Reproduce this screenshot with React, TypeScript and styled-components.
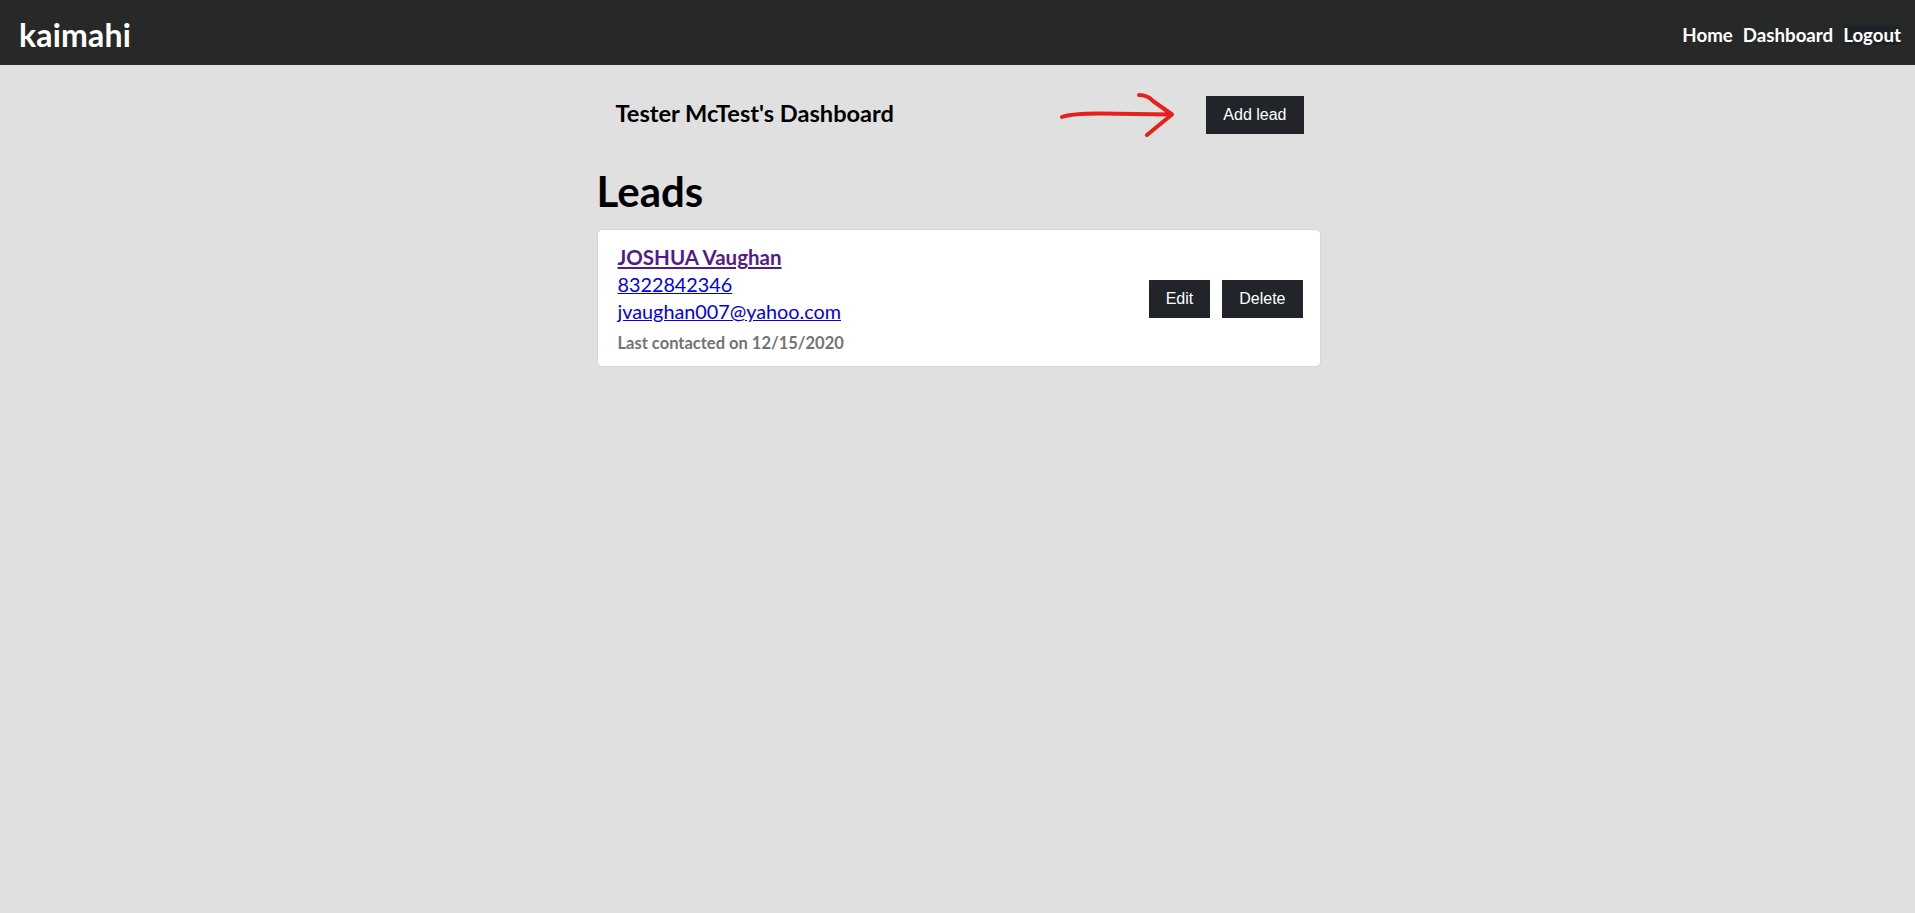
import React from "react";
import styled, { createGlobalStyle } from "styled-components";

const GlobalStyle = createGlobalStyle`
  html, body {
    margin: 0;
    padding: 0;
    background: #e0e0e0;
    font-family: "Lato", "Open Sans", sans-serif;
    color: #000;
  }
  * { box-sizing: border-box; }
`;

const NavBar = styled.nav`
  height: 65px;
  background: #272929;
  display: flex;
  align-items: center;
  justify-content: space-between;
  padding: 4px 14px 0 19px;
`;

const Brand = styled.a`
  color: #fff;
  font-size: 32px;
  font-weight: 700;
  text-decoration: none;
  letter-spacing: 0.2px;
`;

const NavLinks = styled.div`
  display: flex;
  align-items: center;
  gap: 10px;
`;

const NavLink = styled.a<{ $active?: boolean }>`
  color: #fff;
  font-size: 18.7px;
  font-weight: 700;
  text-decoration: none;
  line-height: 20px;
  background: ${(p) => (p.$active ? "#1f2226" : "transparent")};
`;

const Main = styled.main`
  width: 724px;
  margin: 0 auto;
  position: relative;
  left: 1px;
`;

const HeaderRow = styled.div`
  display: flex;
  align-items: center;
  margin-top: 31px;
  padding: 0 17px 0 19px;
  height: 38px;
`;

const Title = styled.h2`
  margin: 0;
  font-size: 23.6px;
  font-weight: 700;
  flex: 1;
  position: relative;
  top: -2px;
`;

const Arrow = styled.svg`
  width: 116px;
  height: 44px;
  margin-right: 30px;
  flex-shrink: 0;
`;

const DarkButton = styled.button`
  background: #212529;
  color: #fff;
  border: none;
  border-radius: 0;
  height: 38px;
  padding: 0 17px;
  font-family: "Liberation Sans", Arial, sans-serif;
  font-size: 16px;
  cursor: pointer;
`;

const SectionTitle = styled.h1`
  margin: 33px 0 14px 0;
  font-size: 42px;
  line-height: 48px;
  font-weight: 700;
`;

const Card = styled.div`
  background: #fff;
  border: 1px solid #d6d6d6;
  border-radius: 5px;
  padding: 14px 17px 13px 20px;
  display: flex;
  align-items: center;
  justify-content: space-between;
`;

const LeadInfo = styled.div`
  display: flex;
  flex-direction: column;
  align-items: flex-start;
`;

const LeadLink = styled.a<{ $visited?: boolean; $bold?: boolean }>`
  color: ${(p) => (p.$visited ? "#551a8b" : "#0000ee")};
  font-weight: ${(p) => (p.$bold ? 700 : 400)};
  font-size: ${(p) => (p.$bold ? "20.5px" : "19.8px")};
  line-height: 27px;
  text-decoration: underline;
`;

const LastContacted = styled.div`
  margin-top: 8px;
  font-size: 16.5px;
  line-height: 20px;
  font-weight: 700;
  color: #737373;
`;

const Actions = styled.div`
  display: flex;
  gap: 12px;
`;

export default function App() {
  return (
    <>
      <GlobalStyle />
      <NavBar>
        <Brand href="#">kaimahi</Brand>
        <NavLinks>
          <NavLink href="#">Home</NavLink>
          <NavLink href="#">Dashboard</NavLink>
          <NavLink href="#" $active>
            Logout
          </NavLink>
        </NavLinks>
      </NavBar>
      <Main>
        <HeaderRow>
          <Title>Tester McTest's Dashboard</Title>
          <Arrow viewBox="0 0 116 44">
            <path
              d="M2 24 C 10 21, 22 20.5, 40 20.5 L 112 21.5 M 79 2 C 85 2, 89 3.5, 93 8 L 112 21.5 L 104 28 L 87 42"
              fill="none"
              stroke="#e5201d"
              strokeWidth="4"
              strokeLinecap="round"
              strokeLinejoin="round"
            />
          </Arrow>
          <DarkButton>Add lead</DarkButton>
        </HeaderRow>
        <SectionTitle>Leads</SectionTitle>
        <Card>
          <LeadInfo>
            <LeadLink href="#" $visited $bold>
              JOSHUA Vaughan
            </LeadLink>
            <LeadLink href="#">8322842346</LeadLink>
            <LeadLink href="#">jvaughan007@yahoo.com</LeadLink>
            <LastContacted>Last contacted on 12/15/2020</LastContacted>
          </LeadInfo>
          <Actions>
            <DarkButton>Edit</DarkButton>
            <DarkButton>Delete</DarkButton>
          </Actions>
        </Card>
      </Main>
    </>
  );
}
